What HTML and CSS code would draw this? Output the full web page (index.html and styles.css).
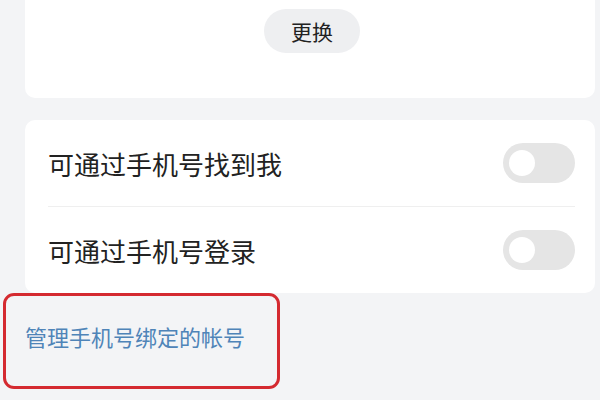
FILE: index.html
```html
<!DOCTYPE html>
<html lang="zh-CN">
<head>
    <meta charset="UTF-8">
    <meta name="viewport" content="width=device-width, initial-scale=1.0">
    <title>手机号</title>
    <link rel="stylesheet" href="styles.css">
</head>
<body>
    <div class="card top-card">
        <button class="change-btn">更换</button>
    </div>

    <div class="card settings">
        <div class="row">
            <span class="row-label">可通过手机号找到我</span>
            <span class="switch"><span class="knob"></span></span>
        </div>
        <div class="row">
            <span class="row-label">可通过手机号登录</span>
            <span class="switch"><span class="knob"></span></span>
        </div>
    </div>

    <div class="highlight">
        <a class="manage-link" href="#">管理手机号绑定的帐号</a>
    </div>
</body>
</html>
```

FILE: styles.css
```css
body {
    margin: 0;
    background-color: #f3f4f6;
    font-family: "Noto Sans CJK SC", "Noto Sans", sans-serif;
    color: #222;
    overflow: hidden;
}
.card {
    background-color: #ffffff;
    margin: 0 5px 0 25px;
    border-radius: 10px;
}
.top-card {
    height: 98px;
    border-radius: 0 0 10px 10px;
    display: flex;
    justify-content: center;
    align-items: flex-start;
    padding-top: 9px;
    box-sizing: border-box;
}
.change-btn {
    background-color: #eeeff1;
    border: none;
    border-radius: 22px;
    width: 96px;
    height: 44px;
    font-family: inherit;
    font-size: 21px;
    color: #222;
    margin-left: 4px;
    cursor: pointer;
}
.settings {
    margin-top: 22px;
    padding: 0 20px 0 23px;
}
.row {
    display: flex;
    align-items: center;
    justify-content: space-between;
    height: 86px;
}
.row + .row {
    border-top: 1px solid #efefef;
}
.row-label {
    font-size: 26px;
}
.switch {
    display: flex;
    align-items: center;
    width: 72px;
    height: 40px;
    border-radius: 20px;
    background-color: #e5e5e5;
    padding-left: 6px;
    box-sizing: border-box;
}
.knob {
    width: 26px;
    height: 26px;
    border-radius: 50%;
    background-color: #ffffff;
}
.highlight {
    width: 277px;
    height: 96px;
    margin: 0 0 0 3px;
    border: 3px solid #d42a30;
    border-radius: 11px;
    box-sizing: border-box;
    padding: 24px 0 0 19px;
}
.manage-link {
    color: #4f84b8;
    font-size: 22px;
    text-decoration: none;
}
```
